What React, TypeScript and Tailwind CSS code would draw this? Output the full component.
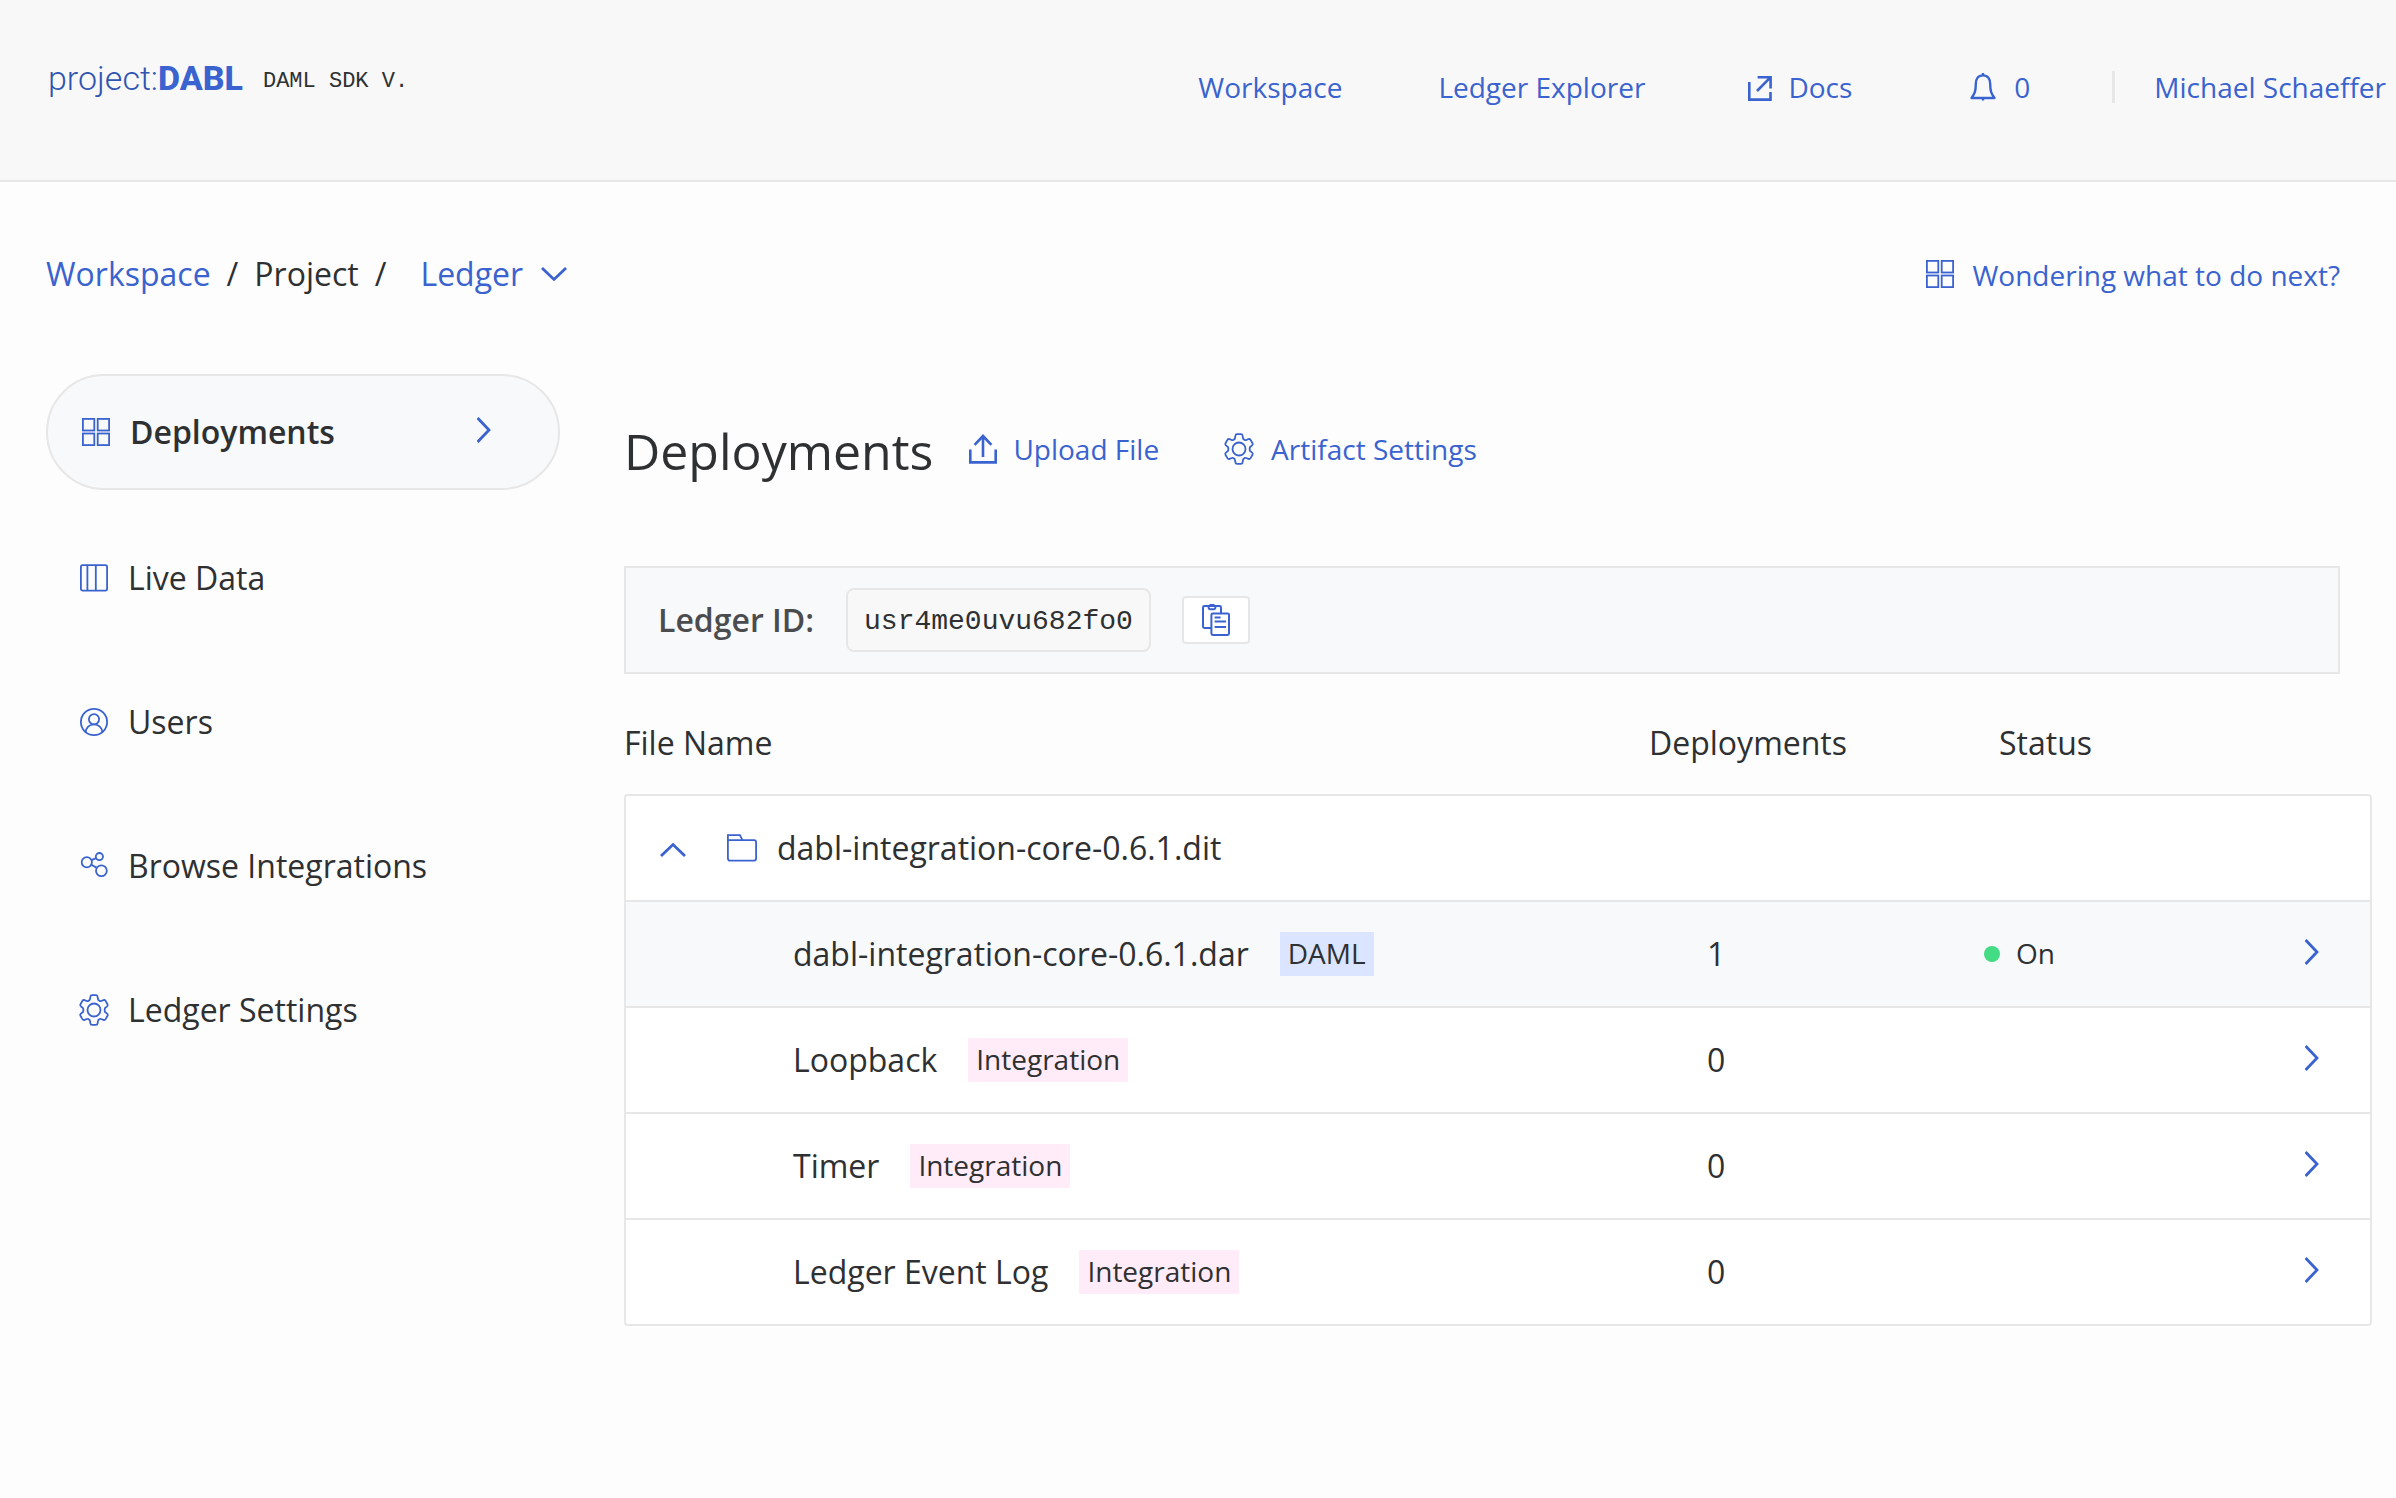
import { useState, type ReactNode } from 'react';

const MONO = "font-['Liberation_Mono',monospace]";

interface IconProps {
  className?: string;
}

function GridIcon() {
  return (
    <svg viewBox="0 0 28 28" className="size-7" fill="none" stroke="currentColor" strokeWidth="1.8" aria-hidden="true">
      <rect x="0.9" y="0.9" width="11.4" height="11.6" />
      <rect x="15.7" y="0.9" width="11.4" height="11.6" />
      <rect x="0.9" y="15.5" width="11.4" height="11.6" />
      <rect x="15.7" y="15.5" width="11.4" height="11.6" />
    </svg>
  );
}

function ColumnsIcon() {
  return (
    <svg viewBox="0 0 28 28" className="size-7" fill="none" stroke="currentColor" strokeWidth="1.8" aria-hidden="true">
      <rect x="0.9" y="1.2" width="26.2" height="25.4" rx="1.8" />
      <path d="M7.4 1.2v25.4M15.8 1.2v25.4" />
    </svg>
  );
}

function UserIcon() {
  return (
    <svg viewBox="0 0 28 28" className="size-7" fill="none" stroke="currentColor" strokeWidth="1.8" aria-hidden="true">
      <circle cx="14" cy="14" r="13.1" />
      <circle cx="14" cy="11.2" r="5.1" />
      <path d="M5.6 24.6c.3-4.8 3.6-8.3 8.4-8.3s8.1 3.5 8.4 8.3" />
    </svg>
  );
}

function NodesIcon() {
  return (
    <svg viewBox="0 0 28 28" className="size-7" fill="none" stroke="currentColor" strokeWidth="1.8" aria-hidden="true">
      <circle cx="6.8" cy="10.2" r="5.1" />
      <circle cx="19.4" cy="4.6" r="3.6" />
      <circle cx="21.4" cy="18.8" r="5.4" />
      <path d="M11.5 8.2l4.6-2M11.4 12.8l5 2.8" />
    </svg>
  );
}

// one quarter of the outline, mirrored into the other three
const GEAR_QUARTER =
  'M16 1.2h1.9q1.5 0 1.7 1.5l.4 2.4q.1.9.9 1.3l.8.5q.8.5 1.6.1l2.1-.9q1.4-.5 2.2.8l1.9 3.3q.7 1.3-.4 2.2l-1.7 1.3q-.7.6-.7 1.4v.9';

function GearIcon() {
  return (
    <svg viewBox="0 0 32 32" className="size-8" fill="none" stroke="currentColor" strokeWidth="1.8" aria-hidden="true">
      <circle cx="16" cy="16" r="6.5" />
      <path d={GEAR_QUARTER} />
      <path d={GEAR_QUARTER} transform="translate(32 0) scale(-1 1)" />
      <path d={GEAR_QUARTER} transform="translate(0 32) scale(1 -1)" />
      <path d={GEAR_QUARTER} transform="translate(32 32) scale(-1 -1)" />
    </svg>
  );
}

function ChevronIcon({ className }: IconProps) {
  return (
    <svg viewBox="0 0 14 26" className={className} fill="none" stroke="currentColor" strokeWidth="2.8" aria-hidden="true">
      <path d="M0.6 1l11.4 12L0.6 25" />
    </svg>
  );
}

function ChevronDownIcon({ className }: IconProps) {
  return (
    <svg viewBox="0 0 26 14" className={className} fill="none" stroke="currentColor" strokeWidth="2.8" aria-hidden="true">
      <path d="M1 1l12 11.4L25 1" />
    </svg>
  );
}

function ExternalIcon() {
  return (
    <svg viewBox="0 0 24 28" className="h-7 w-6" fill="none" stroke="currentColor" strokeWidth="2.6" aria-hidden="true">
      <path d="M1.3 9v17.6h21.2V19M9.6 4.2h13v11.2M22.4 4.4L9 18" />
    </svg>
  );
}

function BellIcon() {
  return (
    <svg viewBox="0 0 26 28" className="h-7 w-[26px]" fill="none" stroke="currentColor" strokeWidth="2.4" strokeLinejoin="round" aria-hidden="true">
      <path d="M13 0v3M13 25v2.6M13 2.4c-4.8 0-7.2 3.6-7.2 8.6 0 7.4-1.2 9.6-4.2 14h22.8c-3-4.4-4.2-6.6-4.2-14 0-5-2.4-8.6-7.2-8.6z" />
    </svg>
  );
}

function UploadIcon() {
  return (
    <svg viewBox="0 0 28 30" className="h-[30px] w-7" fill="none" stroke="currentColor" strokeWidth="2.6" aria-hidden="true">
      <path d="M1.3 15.6v12.8h25.4V15.6M14 23V2.4M5.6 10.8L14 2l8.4 8.8" />
    </svg>
  );
}

function CopyIcon() {
  return (
    <svg viewBox="0 0 28 32" className="h-8 w-7" fill="none" stroke="currentColor" strokeWidth="2" aria-hidden="true">
      <path d="M9.4 24H2.4A1.4 1.4 0 0 1 1 22.6V3.4A1.4 1.4 0 0 1 2.4 2h15.2A1.4 1.4 0 0 1 19 3.4V9.4" />
      <path d="M6.6 2v1.6a1.6 1.6 0 0 0 1.6 1.6h3.6a1.6 1.6 0 0 0 1.6-1.6V2l-2-1H8.6z" />
      <rect x="9.4" y="9.4" width="17.6" height="21.6" rx="1.4" />
      <path d="M12.6 13.6h6M12.6 17.4h11.4M12.6 23h11.4" />
    </svg>
  );
}

function FolderIcon() {
  return (
    <svg viewBox="0 0 30 28" className="h-7 w-[30px]" fill="none" stroke="currentColor" strokeWidth="1.8" aria-hidden="true">
      <path d="M0.9 7V1.2h12l2.6 5" />
      <path d="M0.9 6.2h26.2a2 2 0 0 1 2 2v16.4a2 2 0 0 1-2 2h-24.2a2 2 0 0 1-2-2z" />
    </svg>
  );
}

const sideLinks: { label: string; icon: ReactNode }[] = [
  { label: 'Live Data', icon: <ColumnsIcon /> },
  { label: 'Users', icon: <UserIcon /> },
  { label: 'Browse Integrations', icon: <NodesIcon /> },
  { label: 'Ledger Settings', icon: <GearIcon /> },
];

interface FileRow {
  name: string;
  kind: 'DAML' | 'Integration';
  deployments: number;
  on?: boolean;
}

const files: FileRow[] = [
  { name: 'dabl-integration-core-0.6.1.dar', kind: 'DAML', deployments: 1, on: true },
  { name: 'Loopback', kind: 'Integration', deployments: 0 },
  { name: 'Timer', kind: 'Integration', deployments: 0 },
  { name: 'Ledger Event Log', kind: 'Integration', deployments: 0 },
];

function Header() {
  return (
    <header className="flex items-start justify-between border-b-2 border-[#e7e7e7] bg-[#f8f8f8] pr-[10px] pb-[73px] pl-12">
      <div className="flex items-center gap-5 pt-[54px]">
        <a href="#" className="font-[Roboto,sans-serif] text-[34px] leading-[48px] font-light text-[#2f55b0]">
          project:<b className="font-extrabold text-[#3a63cf]">DABL</b>
        </a>
        <span className={`${MONO} pt-2 text-[22px] leading-10`}>DAML SDK V.</span>
      </div>

      <nav className="flex items-center pt-[67px] text-[28px] leading-10 text-[#3a63cf]">
        <a href="#">Workspace</a>
        <a href="#" className="ml-24">Ledger Explorer</a>
        <a href="#" className="ml-[103px] flex items-center gap-4">
          <ExternalIcon />
          Docs
        </a>
        <button className="ml-[118px] flex items-center gap-[18px]" aria-label="Notifications">
          <BellIcon />
          0
        </button>
        <span className="ml-[82px] h-8 w-[3px] bg-[#e7e7e7]" />
        <a href="#" className="ml-[39px]">Michael Schaeffer</a>
      </nav>
    </header>
  );
}

function Breadcrumb() {
  return (
    <div className="flex items-center justify-between text-[32px] leading-[44px]">
      <div className="flex items-center">
        <a href="#" className="text-[#3a63cf]">Workspace</a>
        <span className="mx-4">/</span>
        <span>Project</span>
        <span className="ml-4">/</span>
        <button className="ml-[34px] flex items-center gap-[18px] text-[#3a63cf]">
          Ledger
          <ChevronDownIcon className="h-[14px] w-[26px]" />
        </button>
      </div>
      <a href="#" className="flex items-center gap-[18px] text-[28px] text-[#3a63cf]">
        <GridIcon />
        <span className="pt-0.5 leading-[42px]">Wondering what to do next?</span>
      </a>
    </div>
  );
}

function SideNav() {
  return (
    <nav className="flex w-[514px] shrink-0 flex-col gap-8 text-[32px] leading-[44px]">
      <a
        href="#"
        aria-current="page"
        className="flex h-[116px] items-center rounded-full border-2 border-[#e7e7e7] bg-[#f8f9fb] pr-[67px] pl-[34px] font-semibold"
      >
        <span className="mr-5 text-[#3a63cf]"><GridIcon /></span>
        Deployments
        <ChevronIcon className="mb-1 ml-auto h-[26px] w-[14px] text-[#3a63cf]" />
      </a>
      {sideLinks.map((link) => (
        <a key={link.label} href="#" className="flex h-28 items-center pl-8">
          <span className="mr-[18px] flex w-8 justify-center text-[#3a63cf]">{link.icon}</span>
          {link.label}
        </a>
      ))}
    </nav>
  );
}

function LedgerIdBar() {
  return (
    <div className="flex h-[108px] items-center border-2 border-[#e7e7e7] bg-[#f8f9fb] px-8">
      <span className="text-[32px] font-semibold text-[#4a4c4f]">Ledger ID:</span>
      <code className={`${MONO} ml-8 rounded-lg border-2 border-[#e7e7e7] bg-[#f8f8f8] px-4 pt-1 text-[28px] leading-[56px]`}>
        usr4me0uvu682fo0
      </code>
      <button
        className="ml-[31px] flex h-12 w-[68px] items-center justify-center rounded border-2 border-[#e7e7e7] bg-white text-[#3a63cf]"
        aria-label="Copy ledger ID"
      >
        <CopyIcon />
      </button>
    </div>
  );
}

function FileTable() {
  const [open, setOpen] = useState(true);

  return (
    <table className="mt-[46px] -mr-8 w-[calc(100%+32px)] border-separate border-spacing-0 text-left text-[32px] leading-[46px]">
      <thead>
        <tr>
          <th className="pb-7 font-normal">File Name</th>
          <th className="w-[336px] pb-7 pl-px font-normal">Deployments</th>
          <th className="w-[300px] pb-7 pl-[15px] font-normal">Status</th>
          <th className="w-[88px]" />
        </tr>
      </thead>
      <tbody className="bg-white">
        <tr>
          <td colSpan={4} className="h-[108px] rounded-t border-2 border-[#e7e7e7] pl-[34px]">
            <button className="flex items-center" onClick={() => setOpen(!open)} aria-expanded={open}>
              <ChevronDownIcon className={`mt-1 h-[14px] w-[26px] text-[#3a63cf] ${open ? 'rotate-180' : ''}`} />
              <span className="mr-5 ml-[41px] text-[#3a63cf]"><FolderIcon /></span>
              dabl-integration-core-0.6.1.dit
            </button>
          </td>
        </tr>
        {open && files.map((file, i) => {
          const last = i === files.length - 1;
          return (
            <tr key={file.name} className={file.on ? 'bg-[#f8f9fb]' : ''}>
              <td className={`h-[106px] border-b-2 border-l-2 border-[#e7e7e7] pl-[167px] ${last ? 'rounded-bl' : ''}`}>
                <div className="flex items-center gap-[31px]">
                  {file.name}
                  <span className={`px-2 pb-0.5 text-[28px] leading-[42px] ${file.kind === 'DAML' ? 'bg-[#dbe5ff]' : 'bg-[#ffecf8]'}`}>
                    {file.kind}
                  </span>
                </div>
              </td>
              <td className="border-b-2 border-[#e7e7e7] pl-[59px]">{file.deployments}</td>
              <td className="border-b-2 border-[#e7e7e7]">
                {file.on && (
                  <span className="flex items-center gap-4 text-[28px] leading-[42px]">
                    <span className="size-4 rounded-full bg-[#43db84]" />
                    <span className="pb-0.5">On</span>
                  </span>
                )}
              </td>
              <td className={`border-r-2 border-b-2 border-[#e7e7e7] pb-1 pl-[21px] text-[#3a63cf] ${last ? 'rounded-br' : ''}`}>
                <a href="#" className="block w-[14px]" aria-label={`Open ${file.name}`}>
                  <ChevronIcon className="h-[26px] w-[14px]" />
                </a>
              </td>
            </tr>
          );
        })}
      </tbody>
    </table>
  );
}

export default function App() {
  return (
    <div className="min-h-screen bg-[#fdfdfd] font-['Open_Sans',sans-serif] text-[#2e3032]">
      <Header />
      <div className="pt-[70px] pr-14 pb-20 pl-[46px]">
        <Breadcrumb />
        <div className="mt-[78px] flex gap-16">
          <SideNav />
          <main className="min-w-0 flex-1 pt-[42px]">
            <div className="mb-20 flex items-center text-[28px] text-[#3a63cf]">
              <h1 className="text-[50px] leading-[70px] text-[#2e3032]">Deployments</h1>
              <button className="ml-9 flex items-center gap-4 pb-1">
                <UploadIcon />
                Upload File
              </button>
              <button className="ml-16 flex items-center gap-4 pb-1">
                <GearIcon />
                Artifact Settings
              </button>
            </div>
            <LedgerIdBar />
            <FileTable />
          </main>
        </div>
      </div>
    </div>
  );
}
